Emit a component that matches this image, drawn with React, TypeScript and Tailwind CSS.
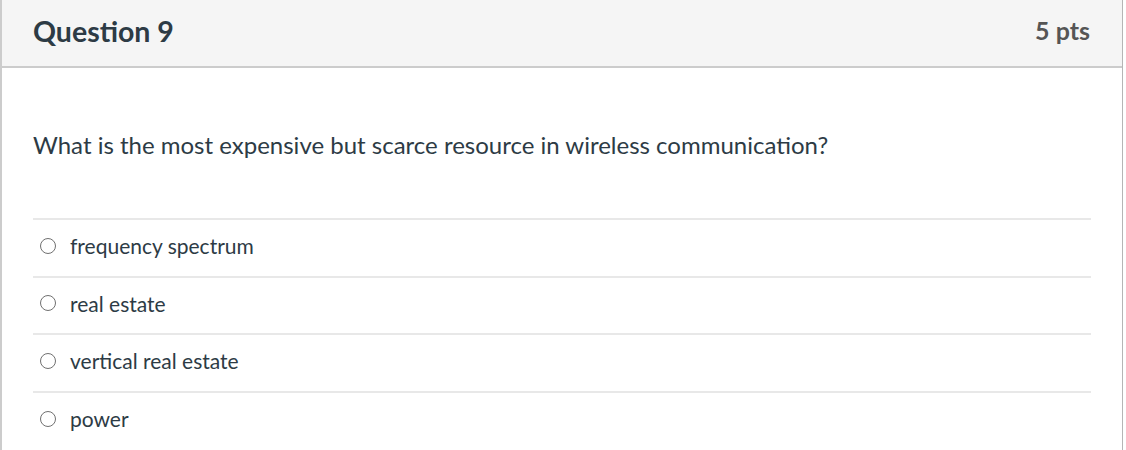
const options = ['frequency spectrum', 'real estate', 'vertical real estate', 'power'];

export default function App() {
  return (
    <div className="h-[450px] w-[1126px] overflow-hidden bg-white font-['Lato','Liberation_Sans',sans-serif]">
      <div className="mr-[3px] h-[470px] border-l-2 border-r border-l-[#cccccc] border-r-[#b5b5b5]">
        <div className="flex h-[68px] items-center justify-between border-b-2 border-[#cccccc] bg-[#f5f5f5] pb-[4px] pl-[31px] pr-[32px]">
          <h2 className="text-[28.5px] font-bold text-[#2d3b45]">Question 9</h2>
          <div className="text-[25px] font-bold text-[#555555]">5 pts</div>
        </div>
        <div className="px-[31px] pt-[61px]">
          <p className="text-[24px] leading-[32px] text-[#2d3b45]">
            What is the most expensive but scarce resource in wireless communication?
          </p>
          <div className="mt-[57px]">
            {options.map((o) => (
              <div key={o} className="flex h-[57.6px] items-center gap-[14px] border-t-2 border-[#e8e8e8] pb-[4px] pl-[7px]">
                <span className="h-[16px] w-[16px] rounded-full border-[1.5px] border-[#707070] bg-white" />
                <span className="text-[21px] text-[#2d3b45]">{o}</span>
              </div>
            ))}
          </div>
        </div>
      </div>
    </div>
  );
}
